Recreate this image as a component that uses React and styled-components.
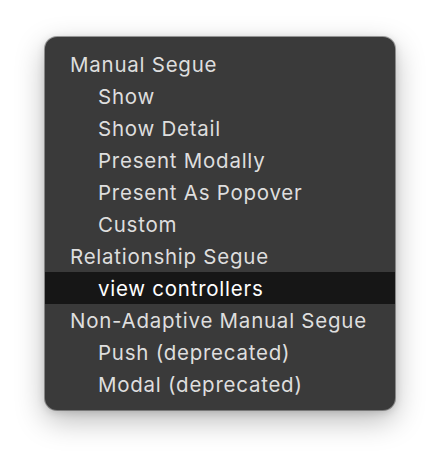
import React from "react";
import styled, { createGlobalStyle } from "styled-components";

const GlobalStyle = createGlobalStyle`
  html, body {
    margin: 0;
    padding: 0;
    background: #ffffff;
  }
  body {
    font-family: Inter, "Noto Sans", sans-serif;
    -webkit-font-smoothing: antialiased;
  }
`;

const Page = styled.div`
  width: 440px;
  height: 464px;
  padding: 37px 0 0 45px;
  box-sizing: border-box;
`;

const Menu = styled.div`
  width: 350px;
  box-sizing: border-box;
  padding: 11px 0 10px;
  background: #3a3a3a;
  border-radius: 12px;
  box-shadow: 0 0 0 1px rgba(0, 0, 0, 0.35), 0 10px 30px rgba(0, 0, 0, 0.28),
    0 2px 8px rgba(0, 0, 0, 0.15);
  display: flex;
  flex-direction: column;
`;

const Row = styled.div`
  height: 32px;
  display: flex;
  align-items: center;
  padding-left: ${(p) => (p.$indent ? "53px" : "25px")};
  font-size: 20.5px;
  font-weight: 400;
  letter-spacing: 0.75px;
  color: ${(p) => (p.$active ? "#ffffff" : "#dedede")};
  background: ${(p) => (p.$active ? "#161616" : "transparent")};
  white-space: nowrap;
`;

const items = [
  { label: "Manual Segue" },
  { label: "Show", indent: true },
  { label: "Show Detail", indent: true },
  { label: "Present Modally", indent: true },
  { label: "Present As Popover", indent: true },
  { label: "Custom", indent: true },
  { label: "Relationship Segue" },
  { label: "view controllers", indent: true, active: true },
  { label: "Non-Adaptive Manual Segue" },
  { label: "Push (deprecated)", indent: true },
  { label: "Modal (deprecated)", indent: true },
];

export default function App() {
  return (
    <>
      <GlobalStyle />
      <Page>
        <Menu>
          {items.map((item) => (
            <Row key={item.label} $indent={item.indent} $active={item.active}>
              {item.label}
            </Row>
          ))}
        </Menu>
      </Page>
    </>
  );
}
